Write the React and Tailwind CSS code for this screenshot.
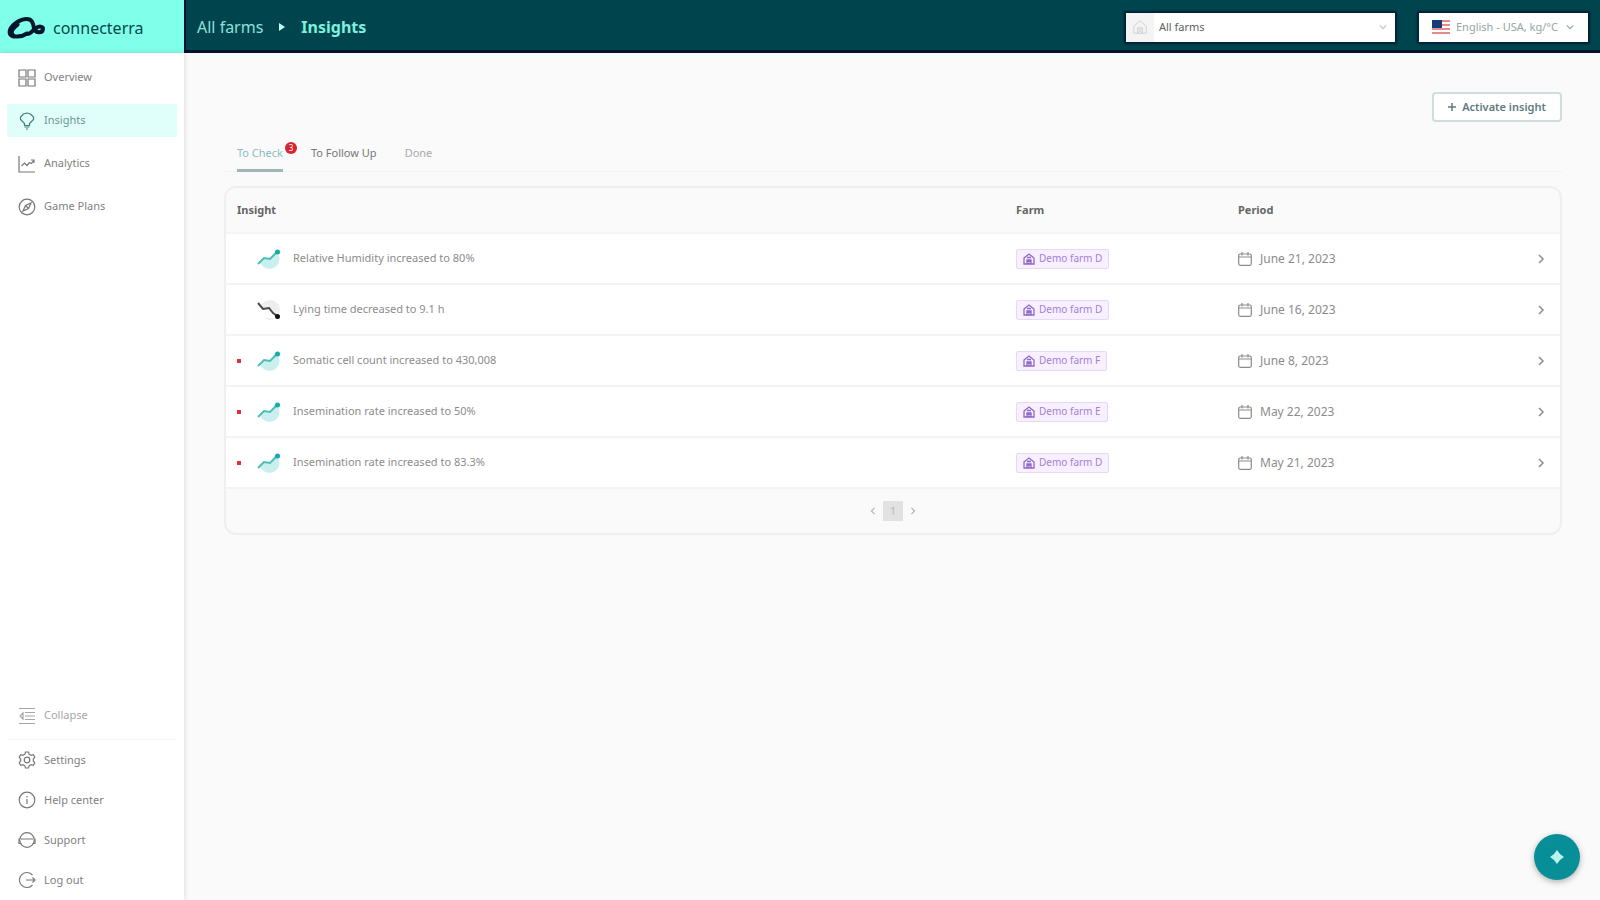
import React from "react";

function Icon({ children, className = "size-[18px]", viewBox = "0 0 18 18" }) {
  return (
    <svg viewBox={viewBox} className={`${className} shrink-0`} fill="none" stroke="currentColor" strokeWidth="1.2" aria-hidden="true">
      {children}
    </svg>
  );
}

const icons = {
  overview: <path d="M1 1h7v7H1zM10 1h7v7h-7zM1 10h7v7H1zM10 10h7v7h-7z" />,
  insights: <path d="M6.500 13.500v-2L2.500 7.500V5l3-3L9 1l3.500 1 3 3v2.500l-4 4v2zM6.500 15h5M8 17h2" />,
  analytics: <path d="M1 1v16h16M3.500 11l3-3 2.500 2.500 2.500-3 2 1L16 5M13 5h3v3" />,
  plans: (
    <>
      <circle cx="9" cy="9" r="7.800" />
      <path d="m13 5-2.500 5.500L5 13l2.500-5.500zM7.500 7.500l3 3" />
    </>
  ),
  collapse: <path d="M1 1.500h16M7 5.500h10M7 9h10M7 12.500h10M1 16.500h16M5 6 2 9l3 3z" />,
  settings: (
    <>
      <path d="M7.500 1h3l.6 2.200 2 1.100 2.200-.6 1.500 2.600L15.300 8v2l1.500 1.700-1.500 2.600-2.200-.6-2 1.100-.6 2.200h-3l-.6-2.200-2-1.100-2.200.6-1.500-2.600L2.700 10V8L1.200 6.300l1.500-2.600 2.200.6 2-1.100z" />
      <circle cx="9" cy="9" r="2.800" />
    </>
  ),
  help: (
    <>
      <circle cx="9" cy="9" r="7.800" />
      <path d="M9 8v5M9 5v1.500" />
    </>
  ),
  support: (
    <>
      <circle cx="9" cy="9" r="7.300" />
      <path d="M1 7.500v5h2.500M17 7.500v5h-2.500M3 8h12" />
    </>
  ),
  logout: <path d="M14.500 4A7.500 7.500 0 1 0 14.500 14M8 9h9M14.500 6.500 17 9l-2.500 2.500" />,
};

function NavLink({ icon, label, active, compact }) {
  return (
    <a
      href="#"
      aria-current={active ? "page" : undefined}
      className={`flex items-center gap-2 pl-[11px] text-[11px] ${compact ? "h-10" : "h-[33px]"} ${
        active ? "bg-[#e0fffa] text-[#6f9491]" : "text-[#7f7f7f]"
      }`}
    >
      <span className={active ? "text-[#3f7f7d]" : "text-[#777]"}>
        <Icon>{icons[icon]}</Icon>
      </span>
      {label}
    </a>
  );
}

function Trend({ down }) {
  return down ? (
    <svg viewBox="0 0 24 22" className="h-[22px] w-6" aria-hidden="true">
      <circle cx="13" cy="11" r="10" fill="#eeeeee" />
      <path d="M0 4l7 7 6-1 8 9H0z" fill="#fff" />
      <path d="m1 4 5 6 6-1 4 5 4 3" fill="none" stroke="#4a4a4a" strokeWidth="2" />
      <circle cx="20.500" cy="17.500" r="2.500" fill="#111" />
    </svg>
  ) : (
    <svg viewBox="0 0 24 22" className="h-[22px] w-6" aria-hidden="true">
      <circle cx="12.500" cy="11" r="10" fill="#c9f0ee" />
      <path d="M0 0h20L13 11 6 10 0 17z" fill="#fff" />
      <path d="m1 16 6-6 6 1 7-7" fill="none" stroke="#4dbfb6" strokeWidth="2" />
      <circle cx="20.500" cy="4" r="2.500" fill="#17aaa8" />
    </svg>
  );
}

function FarmIcon() {
  return (
    <svg viewBox="0 0 12 12" className="size-3 shrink-0" fill="none" stroke="#8f66c8" strokeWidth="1.300" aria-hidden="true">
      <path d="M1 5 6 1l5 4v6H1zM4 11V7h4v4M4 7l4 4M8 7l-4 4M4 4.500h4" />
    </svg>
  );
}

function Chevron({ className, d = "m3 1 4 4-4 4" }) {
  return (
    <svg viewBox="0 0 10 10" className={className} fill="none" stroke="currentColor" strokeWidth="1.500" aria-hidden="true">
      <path d={d} />
    </svg>
  );
}

const rows = [
  { text: "Relative Humidity increased to 80%", farm: "Demo farm D", date: "June 21, 2023" },
  { text: "Lying time decreased to 9.1 h", farm: "Demo farm D", date: "June 16, 2023", down: true },
  { text: "Somatic cell count increased to 430,008", farm: "Demo farm F", date: "June 8, 2023", unread: true },
  { text: "Insemination rate increased to 50%", farm: "Demo farm E", date: "May 22, 2023", unread: true },
  { text: "Insemination rate increased to 83.3%", farm: "Demo farm D", date: "May 21, 2023", unread: true },
];

function Sidebar() {
  return (
    <aside className="z-10 flex w-[184px] shrink-0 flex-col bg-white shadow-[0_0_6px_rgba(0,0,0,0.14)]">
      <nav aria-label="Main" className="flex flex-1 flex-col gap-[10px] px-[7px] pt-2">
        <NavLink icon="overview" label="Overview" />
        <NavLink icon="insights" label="Insights" active />
        <NavLink icon="analytics" label="Analytics" />
        <NavLink icon="plans" label="Game Plans" />
      </nav>
      <div className="px-[7px]">
        <button type="button" className="flex h-12 w-full items-center gap-2 border-b border-[#f3f3f3] pl-[11px] text-[11px] text-[#a6a6a6]">
          <Icon>{icons.collapse}</Icon>
          Collapse
        </button>
        <NavLink icon="settings" label="Settings" compact />
        <NavLink icon="help" label="Help center" compact />
        <NavLink icon="support" label="Support" compact />
        <NavLink icon="logout" label="Log out" compact />
      </div>
    </aside>
  );
}

function Header() {
  return (
    <header className="flex h-[53px] shrink-0">
      <a href="#" className="flex w-[184px] shrink-0 items-center gap-2 bg-[#80ffea] pt-[2px] pl-[7px] text-[16px] text-[#06464d]">
        <svg viewBox="0 0 38 24" className="h-6 w-[38px]" fill="none" stroke="#00172e" strokeLinecap="round" aria-hidden="true">
          <path d="M20 17.500C15 21 5 22 3 18 1 13 9 4 19 3c6-.5 7 4 8 9s8 6 9 1c0-3-4-3-7-1-4 2-4 6-9 6" strokeWidth="4" />
          <path d="M5 18.500c-2-3 1-7 5-10" strokeWidth="5" />
        </svg>
        connecterra
      </a>
      <div className="flex min-w-0 flex-1 items-center border-b-[3px] border-l-2 border-[#00122e] bg-[#00454d] pt-1 pr-3 pl-[11px]">
        <nav aria-label="Breadcrumb" className="flex flex-1 items-center text-[16px] text-[#8fe0d8]">
          <a href="#">All farms</a>
          <svg viewBox="0 0 6 8" className="mx-4 h-2 w-[6px]" fill="#c8fff5" aria-hidden="true">
            <path d="M0 0l6 4-6 4z" />
          </svg>
          <span className="font-bold text-[#7df0df]">Insights</span>
        </nav>
        <label className="flex h-[29px] w-[269px] items-center bg-white shadow-[0_0_2px_2px_#001f36]">
          <span className="flex h-full w-7 items-center justify-center bg-[#f4f4f4] text-[#cfcfcf]">
            <Icon className="size-[14px]">
              <path d="M1 8 9 1l8 7v9H1zM6 17v-7h6v7M6 10l6 7M12 10l-6 7" />
            </Icon>
          </span>
          <select aria-label="Farm" className="h-full min-w-0 flex-1 appearance-none bg-transparent pl-[5px] text-[11px] text-[#606060] outline-none">
            <option>All farms</option>
          </select>
          <Chevron className="mr-2 size-2 text-[#c5c5c5]" d="m1 3 4 4 4-4" />
        </label>
        <label className="ml-6 flex h-[29px] w-[169px] items-center bg-white shadow-[0_0_2px_2px_#001f36]">
          <svg viewBox="0 0 18 14" className="ml-[13px] h-[14px] w-[18px] shrink-0" aria-hidden="true">
            <path d="M0 0h18v14H0z" fill="#fff" />
            <path d="M0 1h18M0 5h18M0 9h18M0 13h18" stroke="#e58b8b" strokeWidth="2" />
            <path d="M0 0h10v8H0z" fill="#173b77" />
          </svg>
          <select aria-label="Language and units" className="h-full min-w-0 flex-1 appearance-none bg-transparent pl-[6px] text-[11px] text-[#92a6a6] outline-none">
            <option>English - USA, kg/°C</option>
          </select>
          <Chevron className="mr-[14px] size-2 shrink-0 text-[#92a6a6]" d="m1 3 4 4 4-4" />
        </label>
      </div>
    </header>
  );
}

function InsightsTable() {
  return (
    <section className="mt-[14px] overflow-hidden rounded-xl border-2 border-[#efefef] bg-[#fafafa]">
      <table className="w-full table-fixed border-collapse text-left text-[11px] text-[#8c8c8c]">
        <colgroup>
          <col />
          <col className="w-[222px]" />
          <col className="w-[265px]" />
          <col className="w-[57px]" />
        </colgroup>
        <thead>
          <tr className="h-[45px] border-b-2 border-[#f5f5f5] text-[11px] text-[#666]">
            <th scope="col" className="pl-[11px] font-bold">Insight</th>
            <th scope="col" className="font-bold">Farm</th>
            <th scope="col" className="font-bold">Period</th>
            <th aria-label="Open" />
          </tr>
        </thead>
        <tbody>
          {rows.map((row) => (
            <tr key={row.text} className="h-[51px] border-b-2 border-[#f3f3f3] bg-white">
              <td className="pl-[11px]">
                <div className="flex items-center">
                  <span className={`mr-4 size-1 ${row.unread ? "bg-[#e02f3c]" : ""}`} />
                  <Trend down={row.down} />
                  <span className="ml-3">{row.text}</span>
                </div>
              </td>
              <td>
                <span className="inline-flex h-5 items-center gap-1 rounded-[2px] border border-[#e6d8fa] bg-[#f8f0ff] px-[6px] align-middle text-[10px] text-[#a57fd8]">
                  <FarmIcon />
                  {row.farm}
                </span>
              </td>
              <td>
                <div className="flex items-center gap-2 text-[12px]">
                  <Icon className="size-[14px]" viewBox="0 0 14 14">
                    <rect x="0.700" y="2" width="12.600" height="11.300" rx="1.500" />
                    <path d="M1 5h12M4 0v3.500M10 0v3.500" />
                  </Icon>
                  {row.date}
                </div>
              </td>
              <td className="pr-[14px] text-right">
                <button type="button" aria-label={`Open ${row.text}`} className="align-middle">
                  <Chevron className="size-[10px]" />
                </button>
              </td>
            </tr>
          ))}
        </tbody>
      </table>
      <nav aria-label="Pagination" className="flex h-11 items-center justify-center gap-[6px] text-[10px] text-[#b5b5b5]">
        <button type="button" aria-label="Previous page">
          <Chevron className="size-2" d="M7 1 3 5l4 4" />
        </button>
        <button type="button" aria-current="page" className="size-5 bg-[#e2e2e2]">1</button>
        <button type="button" aria-label="Next page">
          <Chevron className="size-2" />
        </button>
      </nav>
    </section>
  );
}

export default function App() {
  return (
    <div className="flex min-h-screen flex-col bg-[#fafafa] font-['Noto_Sans',sans-serif]">
      <Header />
      <div className="flex flex-1">
        <Sidebar />
        <main className="min-w-0 flex-1 pt-[39px] pr-[38px] pl-10">
          <div className="flex justify-end">
            <button type="button" className="flex h-[30px] w-[130px] items-center justify-center gap-[6px] rounded-[4px] border-2 border-[#cfdddd] bg-white text-[11px] font-semibold text-[#5d7b7e]">
              <svg viewBox="0 0 8 8" className="size-2" stroke="currentColor" strokeWidth="1.500" aria-hidden="true">
                <path d="M4 0v8M0 4h8" />
              </svg>
              Activate insight
            </button>
          </div>
          <div role="tablist" className="mt-[14px] flex h-9 border-b border-[#f3f3f3] pl-[13px] text-[11px] text-[#777]">
            <button type="button" role="tab" aria-selected="true" className="relative h-9 border-b-[3px] border-[#a2b5b6] pt-[2px] text-[#8bbcba]">
              To Check
              <span className="absolute top-[6px] -right-[14px] flex size-3 items-center justify-center rounded-full bg-[#d9232e] text-[8px] text-white">3</span>
            </button>
            <button type="button" role="tab" aria-selected="false" className="ml-7 h-9 border-b-[3px] border-transparent pt-[2px]">To Follow Up</button>
            <button type="button" role="tab" aria-selected="false" className="ml-7 h-9 border-b-[3px] border-transparent pt-[2px] text-[#aaa]">Done</button>
          </div>
          <InsightsTable />
        </main>
      </div>
      <button type="button" aria-label="Open assistant" className="fixed right-5 bottom-5 flex size-[46px] items-center justify-center rounded-full bg-[#078e97] shadow-[0_2px_6px_rgba(0,0,0,0.3)]">
        <svg viewBox="0 0 14 14" className="size-[14px]" fill="#b9f2ef" aria-hidden="true">
          <path d="M7 0l3 4 4 3-4 3-3 4-3-4-4-3 4-3z" />
        </svg>
      </button>
    </div>
  );
}
